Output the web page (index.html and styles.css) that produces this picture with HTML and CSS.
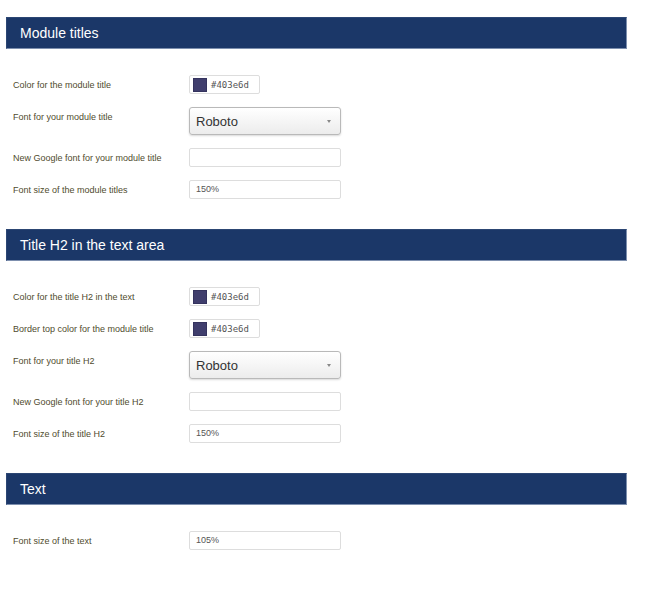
FILE: index.html
```html
<!DOCTYPE html>
<html>
<head>
<meta charset="utf-8">
<link rel="stylesheet" href="styles.css">
</head>
<body>
<div class="page">
  <section class="section">
    <h2 class="bar">Module titles</h2>
    <div class="rows">
      <div class="row"><label class="label">Color for the module title</label><div class="color"><span class="swatch"></span><span class="hex">#403e6d</span></div></div>
      <div class="row"><label class="label">Font for your module title</label><div class="select"><span>Roboto</span><span class="arrow"></span></div></div>
      <div class="row"><label class="label">New Google font for your module title</label><div class="input"></div></div>
      <div class="row"><label class="label">Font size of the module titles</label><div class="input">150%</div></div>
    </div>
  </section>
  <section class="section">
    <h2 class="bar">Title H2 in the text area</h2>
    <div class="rows">
      <div class="row"><label class="label">Color for the title H2 in the text</label><div class="color"><span class="swatch"></span><span class="hex">#403e6d</span></div></div>
      <div class="row"><label class="label">Border top color for the module title</label><div class="color"><span class="swatch"></span><span class="hex">#403e6d</span></div></div>
      <div class="row"><label class="label">Font for your title H2</label><div class="select"><span>Roboto</span><span class="arrow"></span></div></div>
      <div class="row"><label class="label">New Google font for your title H2</label><div class="input"></div></div>
      <div class="row"><label class="label">Font size of the title H2</label><div class="input">150%</div></div>
    </div>
  </section>
  <section class="section">
    <h2 class="bar">Text</h2>
    <div class="rows">
      <div class="row"><label class="label">Font size of the text</label><div class="input">105%</div></div>
    </div>
  </section>
</div>
</body>
</html>
```
FILE: styles.css
```css
* { box-sizing: border-box; }
html, body { margin: 0; padding: 0; background: #fff; }
body { font-family: "Liberation Sans", Arial, sans-serif; }
.page { padding: 17px 0 0 6px; width: 627px; }
.section { margin-bottom: 30px; }
.bar {
  margin: 0;
  height: 32px;
  background: #1b3768;
  border: 1px solid #2c4673;
  border-right-color: #7d8fae;
  border-bottom-color: #7d8fae;
  color: #fff;
  font-size: 14px;
  font-weight: normal;
  line-height: 30px;
  padding-left: 13px;
}
.rows { margin-top: 26px; padding-left: 7px; display: flex; flex-direction: column; gap: 13px; }
.row { display: flex; align-items: flex-start; }
.label {
  width: 176px;
  height: 19px;
  flex: none;
  font-size: 9px;
  line-height: 21px;
  color: #4f4b2e;
}
.color {
  width: 71px; height: 19px;
  border: 1px solid #ddd;
  border-radius: 2px;
  display: flex; align-items: center;
  padding-left: 3px;
  gap: 4px;
}
.swatch { width: 14px; height: 14px; background: #403e6d; border: 1px solid #35335e; }
.hex { font-family: "DejaVu Sans Mono", "Liberation Mono", monospace; font-size: 9px; color: #555; }
.select {
  width: 152px; height: 28px;
  border: 1px solid #b9b9b9;
  border-radius: 3px;
  background: linear-gradient(#ffffff, #ececec);
  box-shadow: 0 1px 2px rgba(0,0,0,0.15);
  display: flex; align-items: center; justify-content: space-between;
  padding: 0 9px 0 6px;
  font-size: 13px;
  color: #333;
}
.arrow {
  width: 0; height: 0;
  border-left: 2px solid transparent;
  border-right: 2px solid transparent;
  border-top: 3px solid #888;
}
.input {
  width: 152px; height: 19px;
  border: 1px solid #ddd;
  border-radius: 2px;
  font-size: 9px;
  line-height: 17px;
  padding-left: 6px;
  color: #555;
}
```
